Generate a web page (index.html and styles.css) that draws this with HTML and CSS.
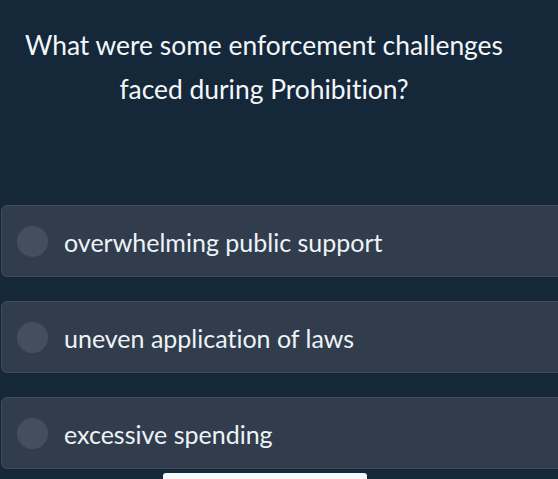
FILE: index.html
```html
<!DOCTYPE html>
<html lang="en">
<head>
    <meta charset="UTF-8">
    <meta name="viewport" content="width=device-width, initial-scale=1.0">
    <title>Quiz</title>
    <link rel="stylesheet" href="styles.css">
</head>
<body>

<div class="question">
    <h2>What were some enforcement challenges faced during Prohibition?</h2>
</div>

<!-- Pilihan jawaban -->
<div class="options">
    <div class="option">
        <span class="radio"></span>
        <span class="label">overwhelming public support</span>
    </div>
    <div class="option">
        <span class="radio"></span>
        <span class="label">uneven application of laws</span>
    </div>
    <div class="option">
        <span class="radio"></span>
        <span class="label">excessive spending</span>
    </div>
</div>

<div class="home-bar"></div>

</body>
</html>
```

FILE: styles.css
```css
/* Halaman gelap, teks terang */
body {
    margin: 0;
    height: 479px;
    overflow: hidden;
    background-color: #15283a;
    font-family: Lato, 'Open Sans', sans-serif;
    font-variant-ligatures: none;
    color: #eef3f7;
    display: flex;
    flex-direction: column;
}

.question {
    padding: 23px 30px 0 0;
    text-align: center;
}

.question h2 {
    margin: 0 auto;
    max-width: 500px;
    font-size: 26.4px;
    font-weight: 400;
    line-height: 44px;
    color: #f3f7fa;
}

.options {
    margin-top: 94px;
    display: flex;
    flex-direction: column;
    gap: 24px;
}

.option {
    height: 72px;
    margin-left: 1px;
    margin-right: -20px;
    display: flex;
    align-items: center;
    background-color: #313d4c;
    border: 1px solid #3d4a5a;
    border-radius: 6px;
    box-sizing: border-box;
}

.radio {
    width: 31px;
    height: 31px;
    margin-left: 15px;
    margin-right: 16px;
    border-radius: 50%;
    background-color: #434f5e;
    flex-shrink: 0;
}

.label {
    font-size: 25px;
    padding-top: 2px;
}

.home-bar {
    margin: 4px 0 0 163px;
    width: 204px;
    height: 10px;
    background-color: #f4f8fb;
    border-radius: 3px 3px 0 0;
}
```
